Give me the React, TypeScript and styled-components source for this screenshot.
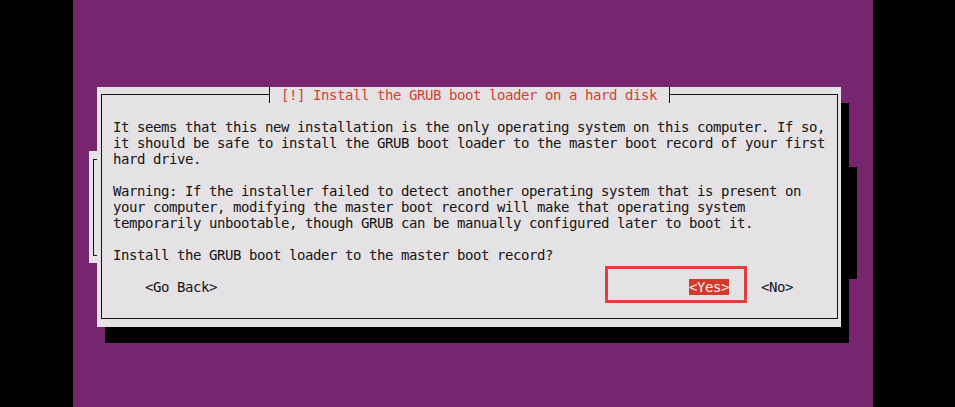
import React from "react";
import styled, { createGlobalStyle } from "styled-components";

const GlobalStyle = createGlobalStyle`
  html, body {
    margin: 0;
    padding: 0;
    background: #000;
  }
  body {
    font-family: "DejaVu Sans Mono", "Liberation Mono", monospace;
  }
`;

const PANEL = "#e4e2e5";
const INK = "#141414";

const Screen = styled.main`
  position: relative;
  width: 800px;
  height: 407px;
  margin-left: 73px;
  padding: 87px 0 0 24px;
  box-sizing: border-box;
  background: #77256f;
  overflow: hidden;
  font-size: 14px;
  letter-spacing: -0.43px;
  line-height: 16px;
  color: ${INK};
`;

const BackWindow = styled.div`
  position: absolute;
  left: 16px;
  top: 151px;
  width: 760px;
  height: 112px;
  padding: 8px 0 7px 4px;
  box-sizing: border-box;
  background: ${PANEL};
  box-shadow: 8px 16px 0 #000;
`;

const BackFrame = styled.div`
  height: 100%;
  border: 1px solid ${INK};
  border-right: none;
  box-sizing: border-box;
`;

const Dialog = styled.section`
  position: relative;
  display: flex;
  width: 744px;
  height: 240px;
  padding: 7px 3px 8px 4px;
  box-sizing: border-box;
  background: ${PANEL};
  box-shadow: 8px 16px 0 #000;
`;

const Frame = styled.div`
  flex: 1;
  display: flex;
  flex-direction: column;
  border: 1px solid ${INK};
`;

const TitleRow = styled.header`
  display: flex;
  height: 16px;
  margin: -8px 0 16px;
  padding-left: 167px;
`;

const Tick = styled.span`
  width: 1px;
  background: ${INK};
`;

const TitleText = styled.h1`
  margin: 0;
  padding: 0 4px 0 3px;
  background: ${PANEL};
  color: #d43f31;
  font: inherit;
  white-space: pre;
`;

const Body = styled.div`
  display: flex;
  flex-direction: column;
  padding-left: 11px;
`;

const Para = styled.p`
  margin: 0 0 16px;
  white-space: pre;
`;

const ButtonRow = styled.div`
  display: flex;
  height: 16px;
  padding: 0 44px 0 32px;
`;

const Actions = styled.div`
  display: flex;
  gap: 32px;
  margin-left: auto;
`;

const Button = styled.span<{ $active?: boolean }>`
  position: relative;
  white-space: pre;
  background: ${(p) => (p.$active ? "#d6392c" : "transparent")};
  color: ${(p) => (p.$active ? "#f6eeee" : INK)};
`;

const Highlight = styled.span`
  position: absolute;
  left: -84px;
  top: -13px;
  right: -18px;
  bottom: -8px;
  border: 3px solid #e63e3f;
  box-sizing: border-box;
  pointer-events: none;
`;

const paragraphs = [
  [
    "It seems that this new installation is the only operating system on this computer. If so,",
    "it should be safe to install the GRUB boot loader to the master boot record of your first",
    "hard drive.",
  ],
  [
    "Warning: If the installer failed to detect another operating system that is present on",
    "your computer, modifying the master boot record will make that operating system",
    "temporarily unbootable, though GRUB can be manually configured later to boot it.",
  ],
  ["Install the GRUB boot loader to the master boot record?"],
];

export default function App() {
  return (
    <>
      <GlobalStyle />
      <Screen>
        <BackWindow>
          <BackFrame />
        </BackWindow>
        <Dialog>
          <Frame>
            <TitleRow>
              <Tick />
              <TitleText>{" [!] Install the GRUB boot loader on a hard disk "}</TitleText>
              <Tick />
            </TitleRow>
            <Body>
              {paragraphs.map((lines, i) => (
                <Para key={i}>{lines.join("\n")}</Para>
              ))}
              <ButtonRow>
                <Button>{"<Go Back>"}</Button>
                <Actions>
                  <Button $active>
                    {"<Yes>"}
                    <Highlight />
                  </Button>
                  <Button>{"<No>"}</Button>
                </Actions>
              </ButtonRow>
            </Body>
          </Frame>
        </Dialog>
      </Screen>
    </>
  );
}
